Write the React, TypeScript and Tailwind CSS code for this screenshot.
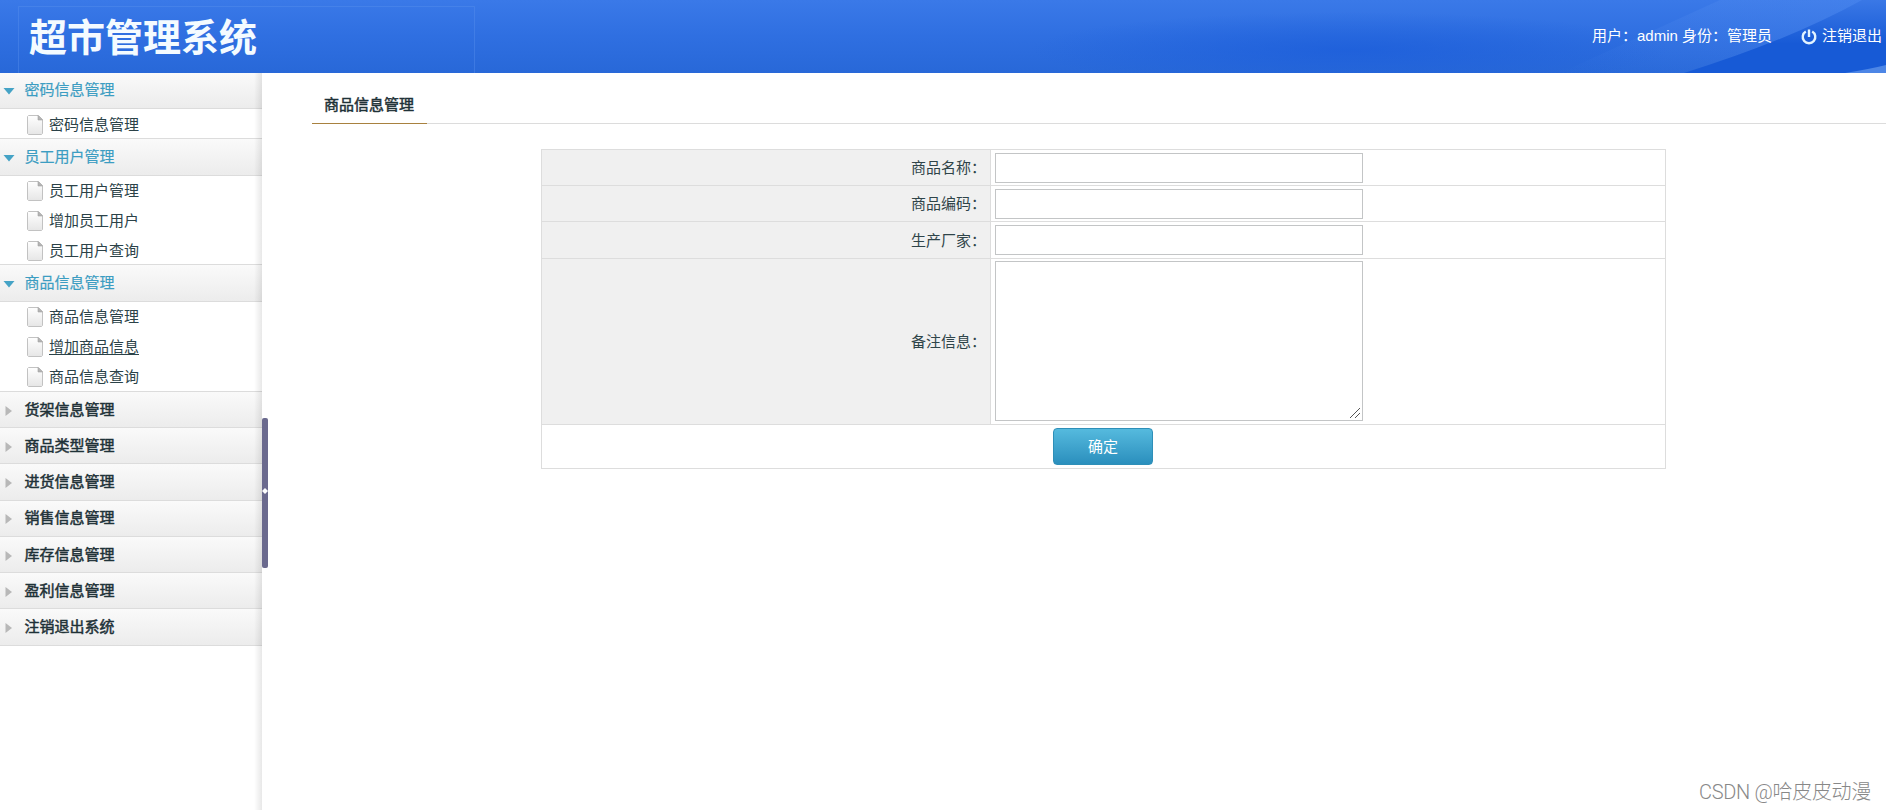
import React, { useState } from "react";

type MenuGroup = {
  title: string;
  items?: string[];
  headClass: string;
  listClass?: string;
};

const MENU: MenuGroup[] = [
  {
    title: "密码信息管理",
    items: ["密码信息管理"],
    headClass: "h-[36px] border-b pb-[2px]",
    listClass: "h-[29px] pt-[1px]",
  },
  {
    title: "员工用户管理",
    items: ["员工用户管理", "增加员工用户", "员工用户查询"],
    headClass: "h-[38px] border-y pb-[2px]",
    listClass: "h-[88px]",
  },
  {
    title: "商品信息管理",
    items: ["商品信息管理", "增加商品信息", "商品信息查询"],
    headClass: "h-[38px] border-y pb-[2px]",
    listClass: "h-[89px]",
  },
  { title: "货架信息管理", headClass: "h-[36px] border-t pb-[1px]" },
  { title: "商品类型管理", headClass: "h-[36px] border-t pb-[1px]" },
  { title: "进货信息管理", headClass: "h-[37px] border-t pb-[2px]" },
  { title: "销售信息管理", headClass: "h-[36px] border-t pb-[2px]" },
  { title: "库存信息管理", headClass: "h-[36px] border-t pb-[1px]" },
  { title: "盈利信息管理", headClass: "h-[36px] border-t pb-[1px]" },
  { title: "注销退出系统", headClass: "h-[38px] border-y pb-[2px]" },
];

const FIELDS = [
  { label: "商品名称", rowClass: "h-[36px]" },
  { label: "商品编码", rowClass: "h-[36px]" },
  { label: "生产厂家", rowClass: "h-[37px]" },
];

function FileIcon() {
  return (
    <svg width="16" height="20" viewBox="0 0 16 20" className="shrink-0">
      <defs>
        <linearGradient id="paper" x1="0" y1="0" x2="0" y2="1">
          <stop offset="0" stopColor="#ffffff" />
          <stop offset="1" stopColor="#e6e6e6" />
        </linearGradient>
      </defs>
      <path
        d="M1.500.5H11.500L15.500 4.500V18.500L14.500 19.500H1.500L.5 18.500V1.500Z"
        fill="url(#paper)"
        stroke="#c2c2c2"
      />
      <path d="M11 .5V5H15.500Z" fill="#b4b4b4" stroke="#a2a2a2" strokeWidth=".6" />
    </svg>
  );
}

function Arrow({ open }: { open: boolean }) {
  return (
    <svg width="12" height="10" viewBox="0 0 12 10" className="mt-[3px] shrink-0">
      {open ? (
        <path d="M.5 2h11L6 8.500Z" fill="#45a3c6" />
      ) : (
        <path d="M2.500 0v10L9 5Z" fill="#b8b8b8" />
      )}
    </svg>
  );
}

function PowerIcon() {
  return (
    <svg
      width="16"
      height="16"
      viewBox="0 0 16 16"
      fill="none"
      stroke="#e2f3ff"
      strokeWidth="2.400"
      className="mt-[2px]"
    >
      <path d="M4.800 2.500a6.300 6.300 0 1 0 6.400 0" />
      <path d="M8 .5v7.500" />
    </svg>
  );
}

function Header() {
  return (
    <header className="relative h-[73px] shrink-0 overflow-hidden bg-linear-to-b from-[#3a79e8] via-[#2f6fe1] to-[#2868d8] text-white">
      <svg
        className="absolute inset-0"
        width="1886"
        height="73"
        viewBox="0 0 1886 73"
      >
        <defs>
          <radialGradient id="glow">
            <stop offset="0" stopColor="#1a5cda" stopOpacity=".7" />
            <stop offset="1" stopColor="#1a5cda" stopOpacity="0" />
          </radialGradient>
          <linearGradient id="beam" x1="0" y1="1" x2="1" y2="0">
            <stop offset="0" stopColor="#5b93f2" stopOpacity="0" />
            <stop offset="1" stopColor="#5b93f2" stopOpacity=".3" />
          </linearGradient>
          <linearGradient id="corner" x1="0" y1="0" x2="0" y2="1">
            <stop offset="0" stopColor="#3a78e6" />
            <stop offset=".6" stopColor="#175ad6" />
          </linearGradient>
        </defs>
        <ellipse cx="1350" cy="50" rx="320" ry="38" fill="url(#glow)" />
        <path d="M1560 73L1720 0H1886V73Z" fill="url(#beam)" />
        <path d="M1684 73Q1790 40 1862 0H1886V73Z" fill="url(#corner)" />
        <path d="M1845 73Q1870 69 1886 65V73Z" fill="#4d86e6" />
        <path d="M18.500 73V6.500H474.500V73" fill="none" stroke="#5b90ee" strokeOpacity=".4" />
      </svg>
      <div className="relative flex h-full items-center justify-between pl-[29px] pr-[4px]">
        <h1 className="mt-[3px] text-[38px] leading-none font-bold text-[#f4fbff]">超市管理系统</h1>
        <div className="-mt-[2px] flex items-center text-[15px] leading-none">
          <span>用户：admin 身份：管理员</span>
          <a href="#" className="ml-[29px] flex items-center gap-[5px]">
            <PowerIcon />
            注销退出
          </a>
        </div>
      </div>
    </header>
  );
}

function Sidebar() {
  const [active, setActive] = useState("增加商品信息");

  return (
    <aside className="relative w-[262px] shrink-0 bg-white">
      {MENU.map((group) => (
        <div key={group.title}>
          <div
            className={`flex items-center border-[#dcdcdc] bg-linear-to-b from-[#fafafa] to-[#ececec] pl-[3px] text-[15px] leading-none ${
              group.items
                ? "text-[#3c9dc2] [-webkit-text-stroke:0.2px_#3c9dc2]"
                : "text-[#1f3238] [-webkit-text-stroke:0.5px_#1f3238]"
            } ${group.headClass}`}
          >
            <Arrow open={!!group.items} />
            <span className="ml-[9.500px]">{group.title}</span>
          </div>
          {group.items && (
            <ul className={group.listClass}>
              {group.items.map((item) => (
                <li
                  key={item}
                  onClick={() => setActive(item)}
                  className="flex h-[30px] cursor-pointer items-center gap-[6px] pl-[27px] text-[15px] leading-none text-[#2b4248]"
                >
                  <FileIcon />
                  <span
                    className={`-mt-[1px] ${
                      active === item ? "underline underline-offset-2" : ""
                    }`}
                  >
                    {item}
                  </span>
                </li>
              ))}
            </ul>
          )}
        </div>
      ))}
      {/* inner shadow along the right edge */}
      <div className="pointer-events-none absolute inset-y-0 right-0 w-[8px] bg-linear-to-r from-transparent to-black/9" />
    </aside>
  );
}

function Splitter() {
  return (
    <div className="flex w-[6px] shrink-0 flex-col pt-[345px]">
      <div className="flex h-[150px] items-center justify-center rounded-[2px] bg-[#6b6a8e] pb-[4px]">
        <svg width="6" height="6" viewBox="0 0 6 6">
          <path d="M3 0L6 3L3 6L0 3Z" fill="#fff" />
        </svg>
      </div>
    </div>
  );
}

function FieldLabel({ text }: { text: string }) {
  return (
    <label className="flex w-[449px] shrink-0 items-center justify-end border-r border-[#dddddd] bg-[#f0f0f0] pr-[4px] leading-none">
      {text}
      <span>：</span>
    </label>
  );
}

function ProductForm() {
  return (
    <form className="ml-[229px] mt-[25px] w-[1125px] border border-[#dddddd] text-[15px] text-[#2f4449]">
      {FIELDS.map((field) => (
        <div key={field.label} className={`flex border-b border-[#dddddd] ${field.rowClass}`}>
          <FieldLabel text={field.label} />
          <div className="pl-[4px] pt-[3px]">
            <input className="block h-[30px] w-[368px] border border-[#c3c5c6] bg-white px-2 outline-none" />
          </div>
        </div>
      ))}
      <div className="flex h-[166px] border-b border-[#dddddd]">
        <FieldLabel text="备注信息" />
        <div className="relative ml-[4px] mt-[2px] h-[160px]">
          <textarea className="block h-[160px] w-[368px] resize-none border border-[#c3c5c6] bg-white px-2 outline-none" />
          <svg
            className="pointer-events-none absolute right-[3px] bottom-[3px]"
            width="10"
            height="10"
            viewBox="0 0 10 10"
            fill="none"
            stroke="#555"
          >
            <path d="M0 10L10 0M5 10L10 5" />
          </svg>
        </div>
      </div>
      <div className="flex h-[43px] justify-center pt-[3px] pr-[1px]">
        <button
          type="button"
          className="h-[37px] w-[100px] rounded-[4px] border border-[#2e8fb8] bg-linear-to-b from-[#55bade] to-[#2a8fbd] text-[15px] leading-none text-white"
        >
          确定
        </button>
      </div>
    </form>
  );
}

export default function App() {
  return (
    <div className="relative flex h-[810px] w-[1886px] flex-col overflow-hidden bg-white font-['Liberation_Sans','Noto_Sans_CJK_SC',sans-serif]">
      <Header />
      <div className="flex flex-1">
        <Sidebar />
        <Splitter />
        <main className="flex-1 pl-[44px]">
          <div className="flex h-[51px] border-b border-[#dcdcdc]">
            <h2 className="-mb-px flex w-[115px] items-center border-b border-[#a8813f] pl-[12px] pt-[12px] text-[15px] leading-none text-[#1f3238] [-webkit-text-stroke:0.5px_#1f3238]">
              商品信息管理
            </h2>
          </div>
          <ProductForm />
        </main>
      </div>
      <div className="absolute right-[15px] bottom-[8px] font-['Roboto','Noto_Sans_CJK_SC',sans-serif] text-[20px] leading-none font-light tracking-[-0.3px] text-[#888888]">
        CSDN @哈皮皮动漫
      </div>
    </div>
  );
}
